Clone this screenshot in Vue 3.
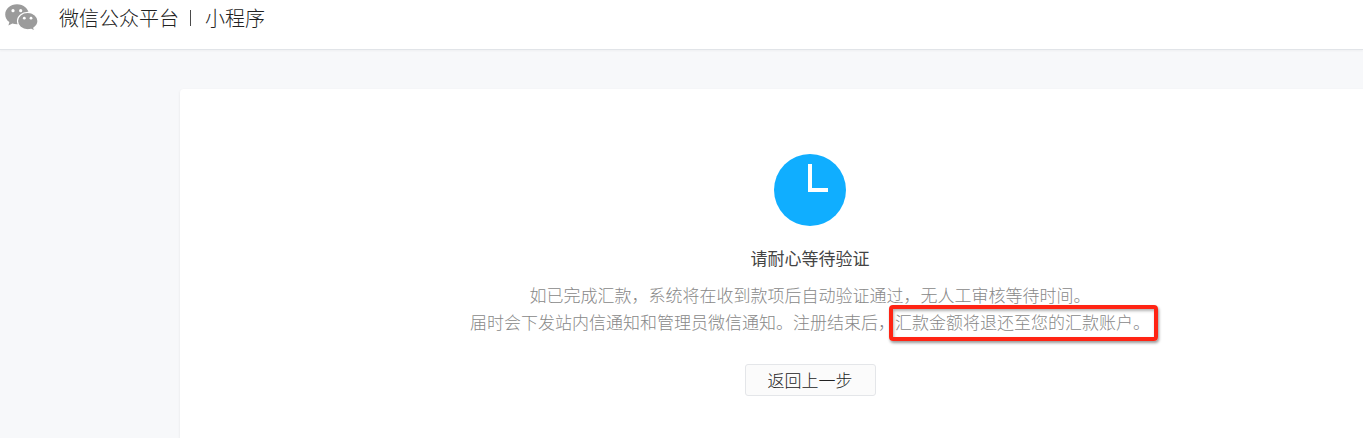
<script setup>
const notice = {
  title: '请耐心等待验证',
  first: '如已完成汇款，系统将在收到款项后自动验证通过，无人工审核等待时间。',
  second: '届时会下发站内信通知和管理员微信通知。注册结束后，',
  highlight: '汇款金额将退还至您的汇款账户。',
}
function goBack() {
  window.history.back()
}
</script>

<template>
  <div class="page">
    <header class="header">
      <svg class="logo" viewBox="0 0 34 28" aria-hidden="true">
        <path fill="#9b9b9b" d="M12 0.3C5.4 0.3 0.2 4.8 0.2 10.4c0 3.1 1.6 5.8 4.2 7.7L3.4 21.6l4-2.1c1.4.4 3 .7 4.6.7 6.6 0 11.8-4.4 11.8-9.8S18.6 0.3 12 .3z" />
        <path fill="#9b9b9b" stroke="#fff" stroke-width="1.2" d="M22.7 8.4c-5.700 0-10.200 3.900-10.200 8.700s4.500 8.700 10.200 8.700c1.300 0 2.500-.2 3.600-.5l3.400 1.900-.9-3.100c2.500-1.700 4.200-4.200 4.200-7 0-4.800-4.600-8.700-10.300-8.700z" />
        <g fill="#fff">
          <circle cx="8" cy="6.7" r="1.6" />
          <circle cx="15.7" cy="6.7" r="1.6" />
          <circle cx="19.3" cy="14.2" r="1.4" />
          <circle cx="26" cy="14.2" r="1.4" />
        </g>
      </svg>
      <h1 class="brand">
        <span>微信公众平台</span>
        <span class="divider"></span>
        <span>小程序</span>
      </h1>
    </header>
    <main class="card">
      <svg class="clock" viewBox="0 0 72 72" aria-hidden="true">
        <circle cx="36" cy="36" r="36" fill="#10aeff" />
        <path d="M36 10v26h18" fill="none" stroke="#fff" stroke-width="4" />
      </svg>
      <h2 class="title">{{ notice.title }}</h2>
      <p class="desc">
        {{ notice.first }}<br />{{ notice.second }}<mark class="highlight">{{ notice.highlight }}</mark>
      </p>
      <button class="back" type="button" @click="goBack">返回上一步</button>
    </main>
  </div>
</template>

<style>
body {
  background: #f7f8fa;
}
</style>

<style scoped>
.page {
  display: flex;
  flex-direction: column;
  min-height: 100vh;
  overflow: hidden;
  background: #f7f8fa;
  color: #222;
  font-family: "Noto Sans CJK SC", sans-serif;
  font-weight: 300;
}
.header {
  display: flex;
  align-items: flex-start;
  gap: 20px;
  box-sizing: border-box;
  height: 50px;
  padding: 4px 5px 0;
  border-bottom: 1px solid #e1e4e8;
  background: #fff;
  box-shadow: 0 1px 2px rgba(0, 0, 0, 0.04);
}
.logo {
  width: 34px;
  height: 28px;
}
.brand {
  display: flex;
  align-items: center;
  margin: 0;
  font-size: 20px;
  font-weight: 300;
  line-height: 28px;
}
.divider {
  width: 1px;
  height: 16px;
  margin: 0 14px 0 11px;
  background: #4a4a4a;
}
.card {
  display: flex;
  flex: 1;
  flex-direction: column;
  align-items: center;
  margin: 39px -77px 0 180px;
  padding: 65px 0 42px;
  border-radius: 4px 4px 0 0;
  background: #fff;
  box-shadow: 0 1px 3px rgba(0, 0, 0, 0.08);
}
.clock {
  width: 72px;
  height: 72px;
}
.title {
  margin: 18px 0 10px;
  color: #444;
  font-size: 17px;
  font-weight: 400;
  line-height: 27px;
}
.desc {
  margin: 0;
  color: #888;
  font-size: 17px;
  line-height: 27px;
  text-align: center;
  white-space: nowrap;
}
.highlight {
  position: relative;
  background: none;
  color: inherit;
}
.highlight::after {
  position: absolute;
  inset: -4px -8px -7px -6px;
  border: 4px solid #ff2414;
  border-radius: 4px;
  box-shadow: 1px 2px 3px rgba(0, 0, 0, 0.4), inset 1px 2px 3px rgba(0, 0, 0, 0.3);
  content: "";
}
.back {
  margin: 29px 0 0;
  padding: 0 22px;
  border: 1px solid #e4e6e9;
  border-radius: 3px;
  background: #fbfbfb;
  color: #222;
  font: inherit;
  font-size: 17px;
  line-height: 30px;
  cursor: pointer;
}
</style>
